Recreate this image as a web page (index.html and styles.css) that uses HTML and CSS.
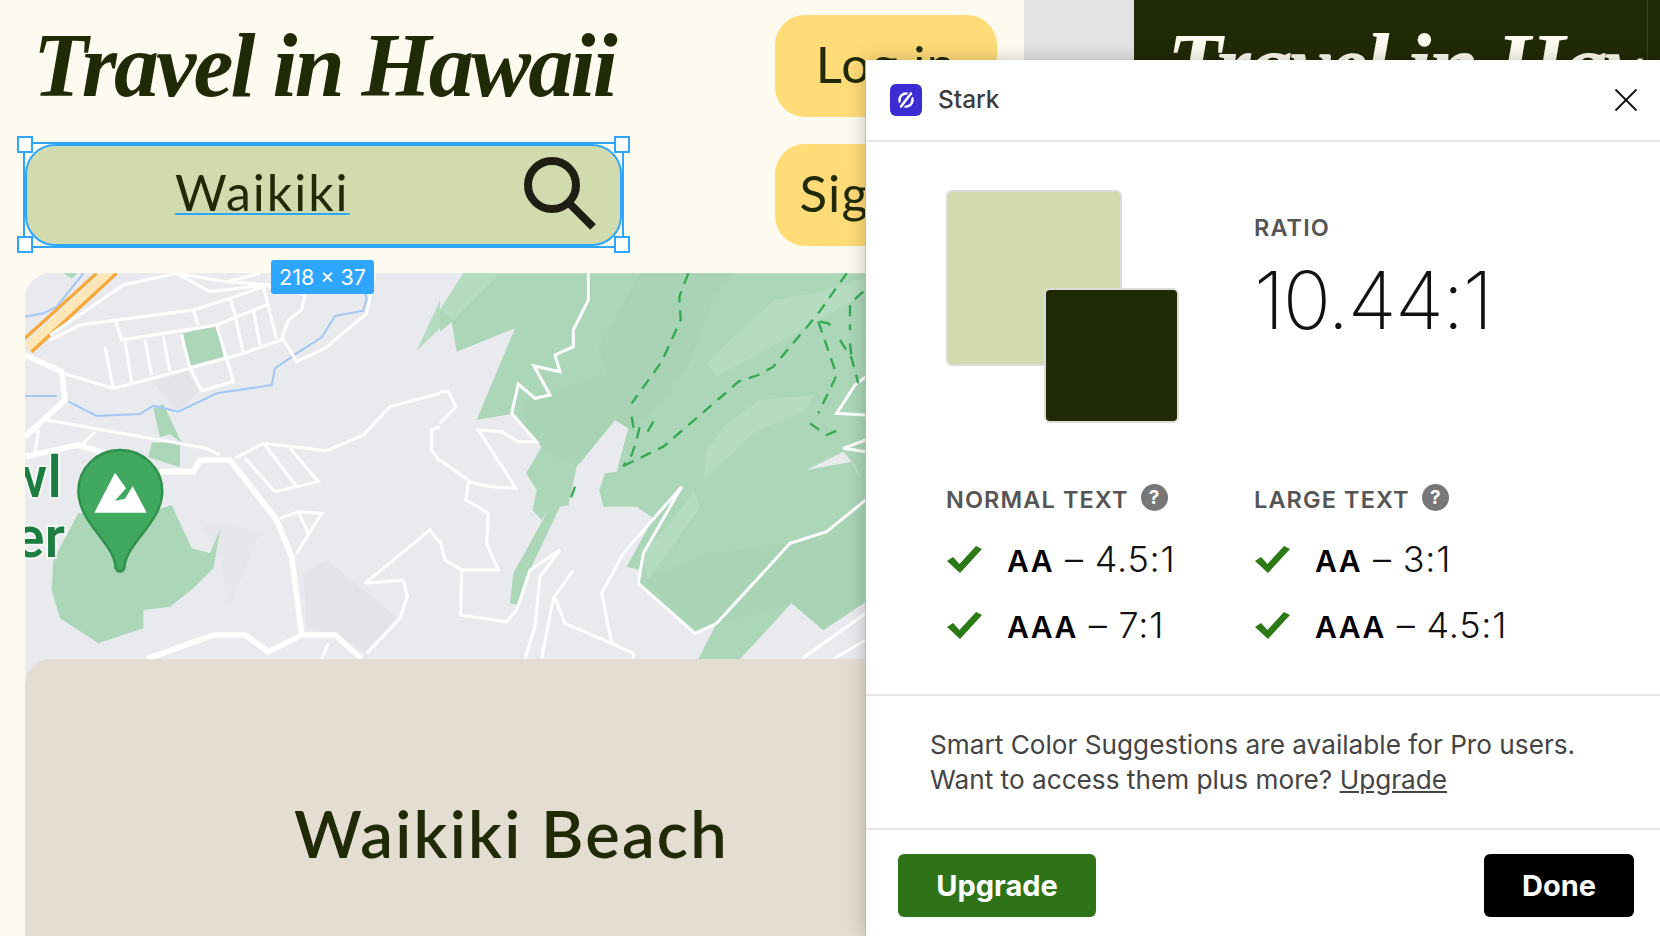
FILE: index.html
```
<!DOCTYPE html>
<html lang="en">
<head>
<meta charset="utf-8">
<title>Travel in Hawaii – Stark</title>
<link rel="stylesheet" href="styles.css">
</head>
<body>
<div class="workspace">
  <section class="frame frame-light">
    <header class="head">
      <div class="head-main">
        <div class="title-row"><h1 class="title">Travel in Hawaii</h1></div>
        <div class="search">
          <span class="search-text">Waikiki</span>
          <svg class="search-icon" viewBox="0 0 76 76" width="76" height="76" aria-hidden="true">
            <circle cx="30" cy="28" r="24" fill="none" stroke="#1e1e14" stroke-width="8"/>
            <path d="M47 46 L71 70" fill="none" stroke="#1e1e14" stroke-width="8"/>
          </svg>
          <i class="selection"></i>
          <i class="handle h-tl"></i><i class="handle h-tr"></i><i class="handle h-bl"></i><i class="handle h-br"></i>
          <span class="size-tag">218 × 37</span>
        </div>
      </div>
      <div class="head-actions">
        <a class="pill">Log in</a>
        <a class="pill">Sign up</a>
      </div>
    </header>
    <div class="map">
      <svg class="map-art" viewBox="25 273 841 407" width="841" height="407" aria-hidden="true">
        <rect x="25" y="273" width="841" height="407" fill="#e9eaee"/>
        <g transform="translate(0,260) scale(.33333)">
          <path class="shade" d="M460,365 L560,335 L600,395 L535,450 L510,430Z"/>
          <path class="shade" d="M910,940 L980,900 L1190,1070 L1100,1180 L1000,1120 L920,1110Z"/>
          <path class="shade2" d="M590,770 L780,820 L690,1040 L660,900Z"/>
          <path class="park" d="M235,760 L160,900 L155,990 L180,1075 L295,1150 L430,1105 L430,1050 L510,1040 L580,985 L640,925 L662,805 L630,880 L575,865 L515,735 L440,760Z"/>
          <path class="park" d="M550,220 L650,197 L670,290 L565,318Z"/>
          <path class="park" d="M455,548 L540,545 L540,622 L445,592Z"/>
          <path class="park" d="M460,445 L490,432 L545,548 L510,522 L480,532Z"/>
          <path class="park" d="M190,40 L232,40 L215,56Z"/>
          <path class="park-light" d="M1250,272 L1320,120 L1320,205Z"/>
          <g class="water">
            <path d="M75,170 L130,160 L170,140 L250,40"/>
            <path d="M75,408 L170,408"/>
            <path d="M205,425 L290,468 L420,462 L460,437 L535,455 L650,400 L815,375 L825,325 L890,280 L965,232 L1005,168 L1090,152 L1100,115 L1090,80"/>
          </g>
          <path d="M75,250 L300,40 L345,40 L90,275Z" fill="#fde6b8"/>
          <path class="highway" d="M75,235 L290,40"/>
          <path class="highway" d="M95,275 L350,40"/>
          <g class="road">
            <path d="M190,340 L340,385 L570,325 L730,280 L850,238 L890,305 L975,265 L1100,160 L1125,40"/>
            <path d="M315,260 L340,385"/><path d="M375,245 L395,365"/><path d="M435,240 L455,345"/><path d="M490,230 L510,335"/><path d="M545,225 L570,325"/>
            <path d="M650,197 L680,295 L700,365 L605,392 L570,325"/>
            <path d="M150,240 L240,195 L350,180 L580,150 L690,115 L790,80 L830,238"/>
            <path d="M345,180 L365,240 L650,195 L810,130"/>
            <path d="M580,150 L595,195"/><path d="M690,115 L705,165 L730,280"/><path d="M760,150 L780,255"/>
            <path d="M150,225 L370,75 L530,40 L630,95 L790,75"/>
            <path d="M530,40 L680,65 L815,75"/><path d="M680,65 L780,40"/>
            <path d="M790,75 L915,105 L905,150 L865,180 L845,238"/>
            <path d="M140,480 L620,565 L660,585"/>
            <path d="M115,510 L105,580"/><path d="M250,550 L285,515"/>
            <path d="M705,595 L790,550 L980,572 L1090,525 L1170,440 L1320,400"/>
            <path d="M735,595 L825,695 L955,665 L870,565"/><path d="M795,555 L890,680"/>
            <path d="M840,775 L895,755 L965,760 L890,880"/><path d="M895,755 L925,820"/>
            <path d="M1095,970 L1290,810 L1320,850"/>
            <path d="M1095,970 L1210,960 L1222,1010 L1200,1075 L1100,1180"/>
            <path d="M1320,500 L1295,510 L1295,570 L1320,605"/>
            <path d="M965,1197 L985,1150"/>
          </g>
          <g class="road-major">
            <path d="M75,285 L185,335 L195,420 L75,530"/>
            <path d="M75,590 L235,555 L330,585"/>
            <path d="M480,635 L580,635 L600,600 L690,600 L830,780 L875,890 L905,1125"/>
            <path d="M440,1197 L640,1125 L735,1125 L805,1175 L905,1125 L1005,1125 L1085,1197"/>
          </g>
        </g>
        <g transform="translate(440,260) scale(.33333)">
          <path class="park" d="M0,215 L0,150 L70,40 L1277,40 L1277,1025 L1150,1110 L1055,1030 L900,1197 L775,1197 L830,1090 L770,1120 L590,970 L600,930 L560,920 L640,775 L590,740 L490,740 L478,690 L495,640 L530,635 L565,505 L525,480 L410,620 L385,735 L360,740 L270,930 L235,1035 L210,1030 L220,940 L325,750 L305,780 L278,750 L290,690 L258,640 L305,560 L250,500 L215,462 L110,480 L225,205 L50,275 L35,185Z"/>
          <path class="park-dark" d="M500,340 L475,260 L600,40 L880,40 L820,120 L740,330 L600,500 L565,505 L525,480 L420,610 L340,590 L305,560 L250,500 L260,420Z"/>
          <path class="park-dark" d="M620,960 L800,880 L1040,850 L1160,815 L1277,720 L1277,1025 L1150,1110 L1055,1030 L1000,1050 L830,1090 L770,1120Z"/>
          <path class="park-light" d="M800,310 L1000,120 L1120,100 L1277,50 L1277,100 L1120,190 L830,350Z"/>
          <path class="park-light" d="M860,490 L960,420 L1120,405 L1100,450 L940,520 L790,660 L800,570Z"/>
          <path class="park-light" d="M0,150 L70,40 L180,40 L40,180Z"/>
          <path class="park-light" d="M610,880 L730,740 L760,690 L780,740 L690,870 L620,960Z"/>
          <path d="M1020,670 L1210,575 L1240,610 L1270,670 L1235,605 L1100,630Z" fill="#e9eaee"/>
          <g class="road">
            <path d="M445,40 L445,120 L400,210 L400,260 L345,285 L360,335 L282,318 L330,405 L285,415 L235,372 L215,460 L250,500 L290,545 L235,545 L185,515 L115,510 L228,685 L150,680 L85,665 L78,720 L145,760 L140,850 L175,930 L65,930 L62,1065 L200,1085 L230,1050 L270,930 L360,870 L300,950 L285,1100 L255,1197"/>
            <path d="M0,395 L25,395 L48,440 L0,490"/>
            <path d="M0,600 L85,660"/>
            <path d="M0,840 L15,900 L65,930"/>
            <path d="M400,930 L340,1015 L305,1197"/>
            <path d="M345,1015 L375,1090 L515,1150 L580,1180 L580,1197"/>
            <path d="M725,680 L550,880 L485,1000 L515,1150"/>
            <path d="M725,680 L610,880 L595,970 L765,1120 L830,1090 L1050,850 L1160,815 L1277,720"/>
            <path d="M1277,350 L1245,375 L1190,460 L1277,465"/>
            <path d="M1277,540 L1210,565 L1277,575"/>
            <path d="M1085,1197 L1277,1060"/>
            <path d="M1180,1197 L1277,1140"/>
          </g>
          <g class="trail">
            <path d="M745,40 L718,110 L722,180 L665,305 L575,430"/>
            <path d="M575,470 L580,500 L600,495 L590,540 L575,585 L550,618"/>
            <path d="M640,485 L620,520"/>
            <path d="M550,618 L670,560 L850,405 L895,365 L955,345 L1000,320 L1135,160 L1220,40"/>
            <path d="M1135,185 L1190,345 L1135,460"/>
            <path d="M1110,490 L1160,525 L1195,510"/>
            <path d="M1270,95 L1230,130 L1230,210"/>
            <path d="M1200,240 L1235,295 L1255,370"/>
            <path d="M1230,250 L1235,295"/>
            <path d="M1140,185 L1165,190 L1185,215"/>
            <path d="M405,680 L385,735"/>
          </g>
        </g>
        <text class="map-label" x="62" y="497">wl</text>
        <text class="map-label" x="65" y="557">er</text>
        <g transform="translate(0,260) scale(.33333)">
          <path d="M360,570 C430,570 487,625 487,693 C487,790 375,850 373,925 Q360,945 347,925 C345,850 235,790 235,693 C235,625 290,570 360,570Z" fill="#41a85f" stroke="#2f8f4c" stroke-width="7"/>
          <path d="M283,758 L345,638 L378,685 L345,722 L375,716 L398,678 L440,758Z" fill="#fff"/>
        </g>
      </svg>
    </div>
    <article class="place-card"><h2 class="place-name">Waikiki Beach</h2></article>
  </section>
  <div class="gutter"></div>
  <section class="frame frame-dark">
    <div class="title-row"><p class="title title-inverse">Travel in Hawaii</p></div>
  </section>
  <div class="frame-edge"></div>
</div>

<aside class="modal">
  <header class="modal-head">
    <span class="logo">
      <svg viewBox="0 0 32 32" width="32" height="32" aria-hidden="true">
        <rect width="32" height="32" rx="6" fill="#3b2cd4"/>
        <circle cx="16" cy="16" r="6.5" fill="none" stroke="#fff" stroke-width="2.6"/>
        <path d="M10 23 L22 9" stroke="#3b2cd4" stroke-width="6"/>
        <path d="M11 22.5 L21 9.5" stroke="#fff" stroke-width="2.6" stroke-linecap="round"/>
      </svg>
    </span>
    <span class="modal-name">Stark</span>
    <svg class="close" viewBox="0 0 24 24" width="24" height="24" aria-hidden="true"><path d="M1.500 1.500 L22.500 22.500 M22.500 1.500 L1.500 22.500" stroke="#111" stroke-width="1.800" fill="none"/></svg>
  </header>
  <div class="modal-body">
    <div class="swatches">
      <div class="swatch swatch-bg"></div>
      <div class="swatch swatch-fg"></div>
    </div>
    <div class="ratio">
      <div class="eyebrow">RATIO</div>
      <div class="ratio-value">10.44:1</div>
    </div>
    <div class="checks">
      <div class="eyebrow-row"><span class="eyebrow">NORMAL TEXT</span><span class="help">?</span></div>
      <div class="check-row">
        <svg class="tick" viewBox="0 0 35 27" width="35" height="27" aria-hidden="true"><path d="M0 15 L6 11 L12.500 18 L29 0 L35 3 L13 27Z" fill="#2c7a16"/></svg>
        <span class="check-text"><b>AA</b> – 4.5:1</span>
      </div>
      <div class="check-row">
        <svg class="tick" viewBox="0 0 35 27" width="35" height="27" aria-hidden="true"><path d="M0 15 L6 11 L12.500 18 L29 0 L35 3 L13 27Z" fill="#2c7a16"/></svg>
        <span class="check-text"><b>AAA</b> – 7:1</span>
      </div>
    </div>
    <div class="checks">
      <div class="eyebrow-row"><span class="eyebrow">LARGE TEXT</span><span class="help">?</span></div>
      <div class="check-row">
        <svg class="tick" viewBox="0 0 35 27" width="35" height="27" aria-hidden="true"><path d="M0 15 L6 11 L12.500 18 L29 0 L35 3 L13 27Z" fill="#2c7a16"/></svg>
        <span class="check-text"><b>AA</b> – 3:1</span>
      </div>
      <div class="check-row">
        <svg class="tick" viewBox="0 0 35 27" width="35" height="27" aria-hidden="true"><path d="M0 15 L6 11 L12.500 18 L29 0 L35 3 L13 27Z" fill="#2c7a16"/></svg>
        <span class="check-text"><b>AAA</b> – 4.5:1</span>
      </div>
    </div>
  </div>
  <div class="modal-note">
    <p>Smart Color Suggestions are available for Pro users.<br>Want to access them plus more? <a class="note-link">Upgrade</a></p>
  </div>
  <footer class="modal-foot">
    <button class="btn btn-green">Upgrade</button>
    <button class="btn btn-black">Done</button>
  </footer>
</aside>
</body>
</html>
```
FILE: styles.css
```
* { box-sizing: border-box; }
html, body { margin: 0; height: 100%; }
body { width: 1660px; height: 936px; overflow: hidden; position: relative; font-family: "Inter", "Liberation Sans", sans-serif; background: #212a06; }
h1, h2, p { margin: 0; }

.workspace { display: flex; width: 1660px; height: 936px; overflow: hidden; }
.frame { height: 936px; overflow: hidden; flex: none; }
.frame-light { width: 1024px; background: #fdfbef; padding: 15px 0 0 25px; }
.gutter { width: 110px; flex: none; background: #e3e3e3; }
.frame-dark { width: 513px; background: #212a06; padding-top: 15px; }
.frame-edge { width: 13px; flex: none; background: #212a06; border-left: 1px solid #3a4220; }

.head { display: flex; gap: 153px; }
.head-main { width: 597px; display: flex; flex-direction: column; gap: 27px; }
.head-actions { display: flex; flex-direction: column; gap: 27px; }
.title-row { height: 102px; display: flex; align-items: center; padding-left: 8px; }
.title { font-family: "Liberation Serif", serif; font-style: italic; font-weight: 700; font-size: 90px; line-height: 1; color: #212a06; white-space: nowrap; letter-spacing: -2.800px; }
.title-inverse { color: #fdfbef; padding-left: 25px; }

.pill { width: 222px; height: 102px; border-radius: 30px; background: #ffdc78; color: #212a06; font-family: "Lato", sans-serif; font-weight: 400; font-size: 51px; letter-spacing: 1.200px; padding-bottom: 6px; display: flex; align-items: center; justify-content: center; }

.search { position: relative; height: 102px; border-radius: 30px; background: #d1dbae; border: 2px solid #2ea6ff; display: flex; align-items: center; padding: 0 22px 0 148px; justify-content: space-between; }
.search-text { font-family: "Lato", sans-serif; font-weight: 400; font-size: 50px; letter-spacing: 2px; line-height: 52px; margin-top: -6px; color: #212a06; text-decoration: underline #2ea6ff 2px; text-underline-offset: 2px; }
.search-icon { margin-top: 0; }
.selection { position: absolute; inset: -4px; border: 2px solid #2ea6ff; }
.handle { position: absolute; width: 16px; height: 17px; background: #fff; border: 2px solid #2ea6ff; }
.h-tl { left: -10px; top: -10px; }
.h-tr { right: -10px; top: -10px; }
.h-bl { left: -10px; bottom: -9px; }
.h-br { right: -10px; bottom: -9px; }
.size-tag { position: absolute; left: 244px; top: 114px; width: 103px; height: 34px; background: #2ea6ff; color: #fff; border-radius: 3px; font-size: 21.500px; display: flex; align-items: center; justify-content: center; z-index: 2; }

.map { margin-top: 27px; width: 974px; height: 406px; background: #e9eaee; border-top-left-radius: 26px; overflow: hidden; }
.map-art { display: block; }
.park { fill: #abd6b8; }
.park-dark { fill: #a8d3b5; }
.park-light { fill: #b5dcc1; }
.shade { fill: #e3e4e8; }
.shade2 { fill: #e6e7eb; }
.water, .road, .road-major, .trail { fill: none; stroke-linejoin: miter; }
.water path { stroke: #a3c7f5; stroke-width: 6; fill: none; }
.highway { stroke: #f5a93a; stroke-width: 10; fill: none; }
.road path { stroke: #fff; stroke-width: 9; fill: none; }
.road-major path { stroke: #fff; stroke-width: 17; fill: none; }
.trail path { stroke: #34a853; stroke-width: 7; fill: none; stroke-dasharray: 34 24; }
.map-label { font-family: "Roboto", sans-serif; font-weight: 500; font-size: 58px; fill: #1c7d42; stroke: #f4f6f4; stroke-width: 4px; paint-order: stroke; text-anchor: end; }

.place-card { margin-top: -20px; position: relative; width: 974px; height: 320px; background: #e3ddd2; border-radius: 26px 26px 0 0; padding: 134px 0 0 269px; }
.place-name { font-family: "Lato", sans-serif; font-weight: 600; font-size: 65px; letter-spacing: 2.250px; line-height: 80px; color: #212a06; white-space: nowrap; }

.modal { position: absolute; left: 865px; top: 60px; width: 795px; height: 876px; background: #fff; border-left: 1px solid #b9b9b9; box-shadow: 0 0 18px rgba(0,0,0,.22); display: flex; flex-direction: column; }
.modal-head { height: 82px; flex: none; border-bottom: 2px solid #e6e6e6; display: flex; align-items: center; padding: 0 22px 0 24px; }
.logo { display: block; width: 32px; height: 32px; }
.logo svg { display: block; }
.modal-name { margin-left: 16px; font-size: 24.400px; font-weight: 500; color: #3d3d3d; margin-top: -2px; }
.close { margin-left: auto; }

.modal-body { flex: none; height: 554px; border-bottom: 2px solid #e6e6e6; padding: 48px 0 0 80px; display: grid; grid-template-columns: 308px 1fr; grid-template-rows: 293px auto; }
.swatches { position: relative; width: 233px; height: 233px; }
.swatch { border-radius: 6px; border: 2px solid #dcdcdc; }
.swatch-bg { width: 176px; height: 176px; background: #d1dbae; }
.swatch-fg { position: absolute; left: 98px; top: 98px; width: 135px; height: 135px; background: #212a06; }
.ratio { padding-top: 24px; }
.eyebrow { font-size: 23.500px; font-weight: 600; color: #555; letter-spacing: 1.100px; line-height: 28px; }
.ratio-value { margin-top: 13px; font-size: 80px; font-weight: 200; line-height: 90px; letter-spacing: -1.700px; color: #111; }
.eyebrow-row { display: flex; align-items: center; gap: 12px; height: 30px; padding-top: 4px; }
.help { width: 27px; height: 27px; border-radius: 50%; background: #777; color: #fff; font-size: 19px; font-weight: 700; display: flex; align-items: center; justify-content: center; margin-top: -6px; }
.check-row { display: flex; align-items: center; gap: 25px; height: 40px; margin-top: 26px; padding-left: 1px; }
.check-text { font-size: 36px; font-weight: 300; color: #111; letter-spacing: .8px; white-space: nowrap; }
.check-text b { font-size: 30px; font-weight: 600; letter-spacing: 1.500px; color: #000; }
.tick { flex: none; }

.modal-note { flex: none; height: 134px; border-bottom: 2px solid #e6e6e6; padding: 31px 0 0 64px; }
.modal-note p { font-size: 26.200px; line-height: 35px; color: #444; }
.note-link { text-decoration: underline; }

.modal-foot { flex: 1; display: flex; justify-content: space-between; padding: 24px 26px 0 32px; }
.btn { height: 63px; border: 0; border-radius: 6px; color: #fff; font-family: "Inter", sans-serif; font-weight: 700; font-size: 29px; }
.btn-green { width: 198px; background: #2e7318; }
.btn-black { width: 150px; background: #000; }
```
